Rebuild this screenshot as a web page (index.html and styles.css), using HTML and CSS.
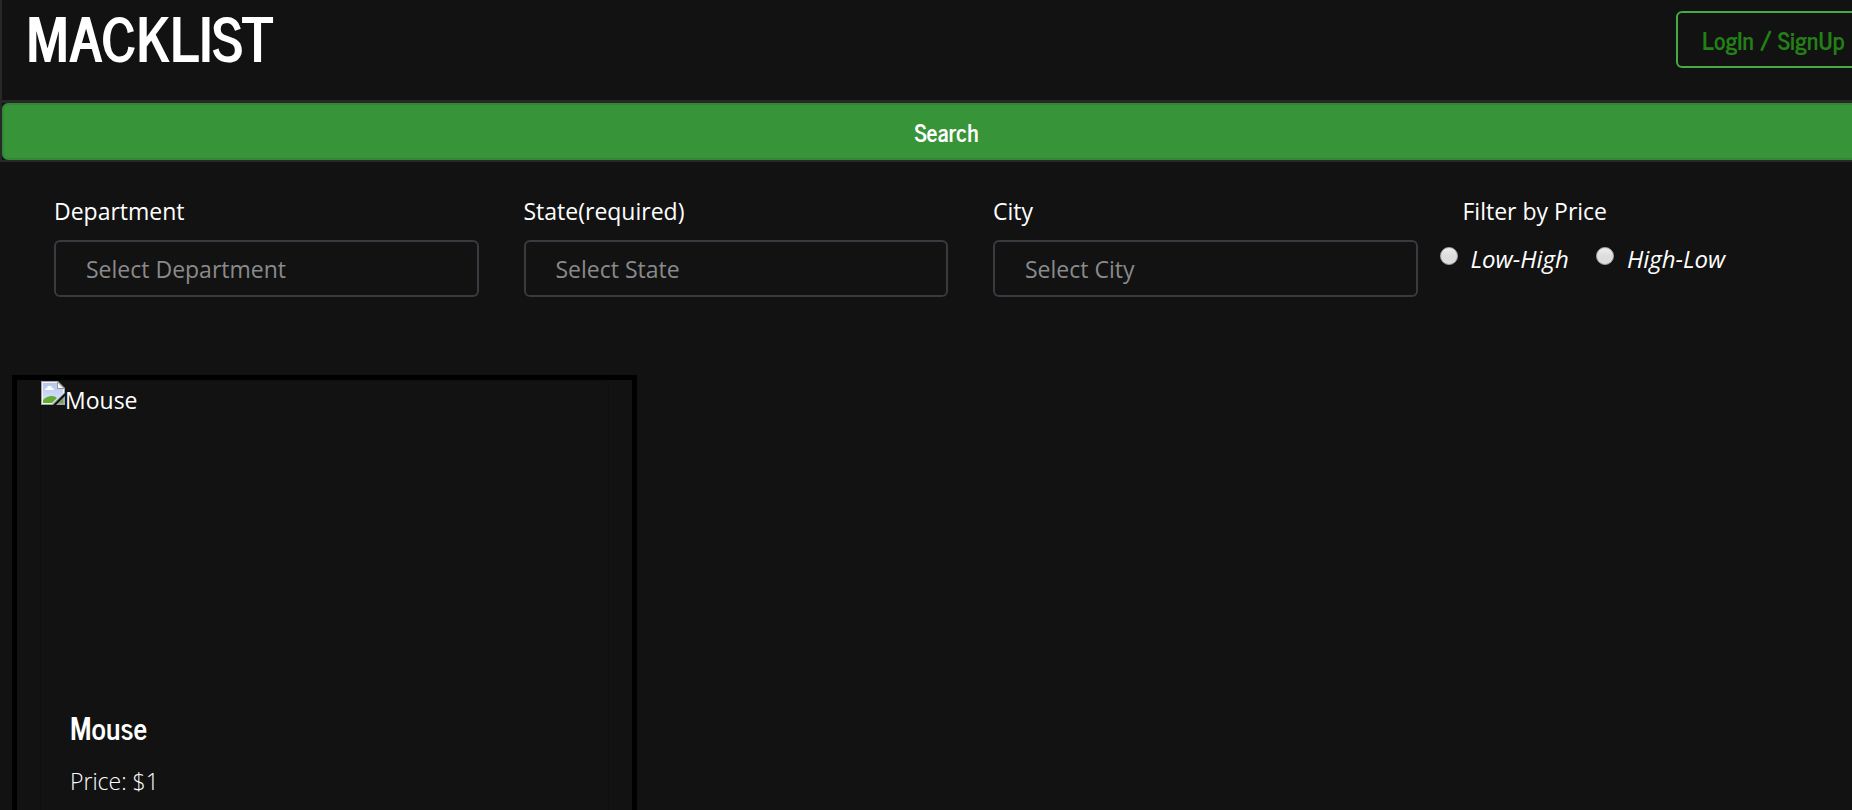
FILE: index.html
```html
<!DOCTYPE html>
<html lang="en">
<head>
<meta charset="utf-8">
<title>Macklist</title>
<link rel="stylesheet" href="styles.css">
</head>
<body>
<div class="page">
  <header class="banner">
    <div class="topbar">
      <h1 class="brand">MACKLIST</h1>
      <button class="login" type="button">LogIn / SignUp</button>
    </div>
    <button class="search" type="submit" form="filters">Search</button>
  </header>

  <form class="filters" id="filters">
    <div class="field">
      <label for="department">Department</label>
      <input class="box" id="department" type="text" placeholder="Select Department">
    </div>
    <div class="field">
      <label for="state">State(required)</label>
      <input class="box" id="state" type="text" placeholder="Select State">
    </div>
    <div class="field">
      <label for="city">City</label>
      <input class="box" id="city" type="text" placeholder="Select City">
    </div>
    <div class="field" role="radiogroup" aria-labelledby="price-title">
      <span id="price-title">Filter by Price</span>
      <div class="options">
        <label class="option"><input type="radio" name="price"><span>Low-High</span></label>
        <label class="option"><input type="radio" name="price"><span>High-Low</span></label>
      </div>
    </div>
  </form>

  <main class="listings">
    <article class="listing">
      <div class="card">
        <div class="photo">
          <svg class="missing" viewBox="0 0 24 24" aria-hidden="true">
            <defs><linearGradient id="sky" x1="0" y1="0" x2="0" y2="1"><stop offset="0" stop-color="#b4c8f0"/><stop offset="1" stop-color="#dbe5fb"/></linearGradient></defs>
            <path d="M0 0h17l7 7v5L12 24H0z" fill="#a3a3a3"/>
            <path d="M1 1h15v7h7v4L11 23H1z" fill="#f4f4f4"/>
            <path d="M2 2h14v6h6v4L12 22H2z" fill="url(#sky)"/>
            <path d="M16.500 1v6.500h6.500z" fill="#fff" stroke="#999" stroke-width="1"/>
            <path d="M4 9q0-2 2-2 1-3 3-2 2 0 2 2 2 0 2 2z" fill="#fff"/>
            <path d="M2 22v-3q4-4 9-4 3 0 5 2l-5 5z" fill="#61ad32"/>
            <path d="M24 15v9h-9z" fill="#a3a3a3"/>
            <path d="M22 18v4h-4z" fill="#61ad32"/>
          </svg>
          <span>Mouse</span>
        </div>
        <div class="details">
          <h2 class="title">Mouse</h2>
          <p class="price">Price: $1</p>
        </div>
      </div>
    </article>
  </main>
</div>
</body>
</html>
```
FILE: styles.css
```css
* { box-sizing: border-box; }

body {
  height: 100vh;
  margin: 0;
  overflow: hidden;
  background: #121212;
  color: #fff;
  font: 23px/36px "Open Sans", "Noto Sans", sans-serif;
}

button, input { font: inherit; }

/* the page runs a little past the right edge of the window */
.page { width: calc(100% + 41px); }

.banner {
  border: solid #282828;
  border-width: 0 2px 2px;
}

.topbar {
  display: flex;
  justify-content: space-between;
  align-items: flex-start;
  height: 103px;
  padding: 0 21px 0 24px;
  border-bottom: 3px solid #282828;
}

.brand, .login, .search, .title {
  font-family: "News Cycle", "Roboto Condensed", "Open Sans Condensed", Roboto, sans-serif;
}

.brand {
  margin: 0;
  font-size: 60px;
  line-height: 72px;
  font-weight: 700;
}

.login {
  width: 194px;
  height: 57px;
  margin-top: 11px;
  padding: 0 24px;
  border: 2px solid #43ac43;
  border-radius: 6px;
  background: transparent;
  color: #238016;
  font-size: 24px;
  font-weight: 700;
  text-align: left;
  white-space: nowrap;
}

.search {
  display: block;
  width: 100%;
  height: 57px;
  border: 2px solid #338836;
  border-radius: 6px;
  background: #379439;
  color: #fff;
  font-size: 24px;
  font-weight: 700;
}

.filters {
  display: grid;
  grid-template-columns: repeat(4, minmax(0, 1fr));
  gap: 45px;
  padding: 31px 6px 0 54px;
}

.field > label, .field > span { display: block; margin-bottom: 11px; }

.box {
  display: block;
  width: 100%;
  height: 57px;
  padding: 0 30px;
  border: 2px solid #373a3e;
  border-radius: 6px;
  background: transparent;
  color: #fff;
}

.box::placeholder { color: #8a8a8a; opacity: 1; }

.options {
  display: flex;
  gap: 27px;
  margin-left: -23px;
}

.option {
  display: flex;
  gap: 13px;
  font-size: 24px;
  line-height: 38px;
  font-style: italic;
}

.option input {
  appearance: none;
  width: 18px;
  height: 18px;
  margin: 7px 0 0;
  border: 1px solid #a8a8a8;
  border-radius: 50%;
  background: linear-gradient(#eee, #ddd 50%);
}

.listings {
  display: grid;
  grid-template-columns: repeat(3, minmax(0, 1fr));
  padding: 78px 6px 0 12px;
}

.listing {
  padding: 0 23px 24px;
  border: 5px solid #000;
}

.card {
  border: 1px solid #0f0f0f;
  border-radius: 6px;
}

.photo {
  display: flex;
  height: 316px;
}

.missing { width: 24px; height: 24px; }

.photo span { padding-top: 1px; }

.details { padding: 12px 29px 29px; }

.title {
  margin: 0 0 18px;
  font-size: 30px;
  line-height: 36px;
  font-weight: 700;
}

.price {
  margin: 0;
  font-weight: 300;
}
```
